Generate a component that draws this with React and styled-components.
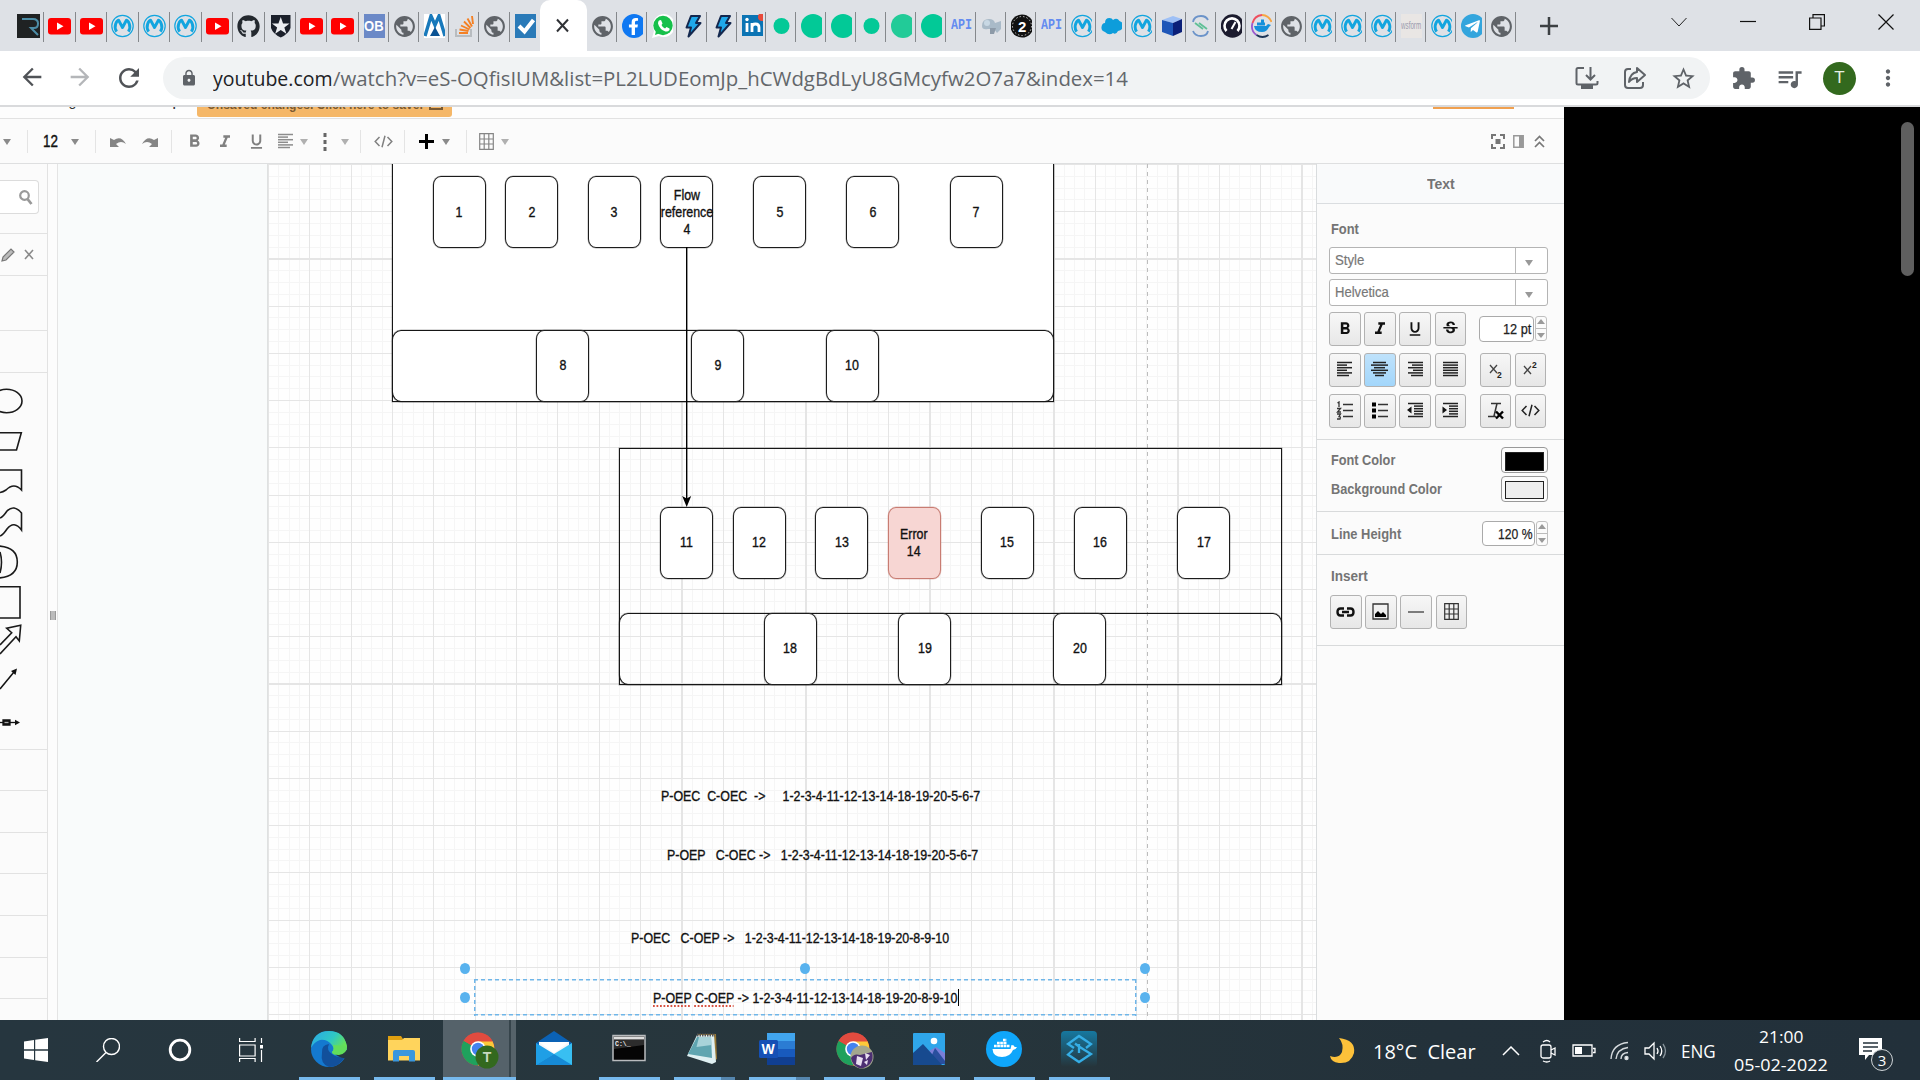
import React, { useLayoutEffect, useRef, useState } from "react";
import styled, { createGlobalStyle, css } from "styled-components";
import {
  MdPublic, MdLock, MdStarBorder, MdExtension, MdQueueMusic, MdMoreVert, MdRefresh,
  MdArrowBack, MdArrowForward, MdFormatBold, MdFormatItalic, MdFormatUnderlined,
  MdStrikethroughS,
} from "react-icons/md";
import { FaGithub, FaFacebookF, FaWhatsapp, FaTelegramPlane } from "react-icons/fa";

const SANS = '"Liberation Sans", Arial, sans-serif';
const UI = '"Open Sans", "Noto Sans", sans-serif';
const UX = 10.335;
const UY = 11.805;

const Global = createGlobalStyle`
  * { box-sizing: border-box; }
  body { margin: 0; background: #000; overflow: hidden; font-family: ${SANS}; }
  svg { display: block; flex: none; }
`;

/* ---------- text fitted to a given width ---------- */
const FitBox = styled.span`
  display: inline-block;
  flex: none;
  white-space: pre;
  width: ${(p) => p.$w}px;
  > span { display: inline-block; transform-origin: left center; }
`;
function Fit({ w, children }) {
  const ref = useRef(null);
  const [k, setK] = useState(1);
  useLayoutEffect(() => {
    setK(w / ref.current.offsetWidth);
  }, [w]);
  return (
    <FitBox $w={w}>
      <span ref={ref} style={{ transform: `scaleX(${k})` }}>{children}</span>
    </FitBox>
  );
}

/* ---------- browser chrome ---------- */
const Screen = styled.div`
  width: 1920px;
  height: 1080px;
  display: flex;
  flex-direction: column;
  overflow: hidden;
`;
const TabStrip = styled.div`
  height: 51px;
  flex: none;
  display: flex;
  background: #dee1e6;
  padding-left: 13px;
`;
const Tab = styled.div`
  width: ${(p) => p.$w}px;
  height: 51px;
  flex: none;
  display: flex;
  padding-left: ${(p) => (p.$w > 31 ? 4 : 5)}px;
  align-items: center;
  justify-content: space-between;
  &::after {
    content: "";
    width: 1px;
    height: 30px;
    margin-top: 2px;
    background: ${(p) => (p.$last ? "transparent" : "#85888c")};
  }
`;
const Fav = styled.div`
  width: ${(p) => p.$w}px;
  height: 24px;
  margin-top: 1px;
  overflow: hidden;
  display: flex;
  align-items: center;
`;
const ActiveTab = styled.div`
  width: 47px;
  height: 51px;
  flex: none;
  background: #fff;
  border-radius: 10px 10px 0 0;
  display: flex;
  align-items: center;
  justify-content: center;
  padding-right: 2px;
`;
const NewTab = styled.div`
  width: 66px;
  display: flex;
  align-items: center;
  justify-content: center;
`;
const WindowControls = styled.div`
  margin-left: auto;
  display: flex;
  align-items: flex-start;
  padding: 14px 26px 0 0;
  gap: 53px;
`;
const AddressBar = styled.div`
  height: 56px;
  flex: none;
  background: #fff;
  border-bottom: 2px solid #d9dadc;
  display: flex;
  align-items: center;
  color: #5f6368;
  padding: 0 19px 0 18px;
`;
const NavButtons = styled.div`
  display: flex;
  width: 145px;
  gap: 20px;
`;
const Omnibox = styled.div`
  width: 1547px;
  height: 42px;
  border-radius: 21px;
  background: #f1f3f4;
  display: flex;
  align-items: center;
  padding: 0 13px 0 17px;
  font: 20px ${UI};
`;
const LockSlot = styled.div`
  width: 33px;
`;
const OmniActions = styled.div`
  margin-left: auto;
  display: flex;
  gap: 22px;
`;
const Url = styled.span`
  display: flex;
  color: ${(p) => (p.$host ? "#202124" : "#63676b")};
`;
const BarActions = styled.div`
  display: flex;
  align-items: center;
  margin-left: auto;
  gap: 19px;
`;
const Avatar = styled.div`
  width: 33px;
  height: 33px;
  border-radius: 50%;
  background: #33691e;
  color: #e8efe4;
  display: flex;
  align-items: center;
  justify-content: center;
  font: 17px ${SANS};
`;

/* ---------- editor ---------- */
const Stage = styled.div`
  height: 913px;
  flex: none;
  display: flex;
  background: #000;
`;
const Editor = styled.div`
  width: 1564px;
  flex: none;
  display: flex;
  flex-direction: column;
  background: #fcfcfc;
`;
const Scroll = styled.div`
  width: 13px;
  height: 154px;
  margin: 15px 6px 0 auto;
  border-radius: 7px;
  background: #5f5f5f;
`;
const MenuRow = styled.div`
  height: 12px;
  flex: none;
  overflow: hidden;
  display: flex;
  align-items: flex-start;
  background: #fdfdfd;
  border-bottom: 1px solid #e2e2e2;
`;
const MenuText = styled.div`
  font: 15px/18px ${SANS};
  color: #333;
  margin: -15px 0 0 ${(p) => p.$gap}px;
`;
const SaveNotice = styled.div`
  width: 255px;
  height: 10px;
  margin-left: 15px;
  border-radius: 0 0 3px 3px;
  background: #f5b768;
  color: #7b5a31;
  overflow: hidden;
  display: flex;
  font: bold 13.5px/16px ${SANS};
  padding-left: 10px;
  > * { margin-top: -10px; }
  > svg { margin: -10px 0 0 6px; }
`;
const ShareStub = styled.div`
  width: 81px;
  height: 2px;
  margin: 0 50px 0 auto;
  background: #f0a04f;
`;
const ToolRow = styled.div`
  height: 45px;
  flex: none;
  display: flex;
  align-items: center;
  background: #fbfbfb;
  border-bottom: 1px solid #dedfe0;
  padding-top: 1px;
  color: #777;
`;
const Tool = styled.div`
  margin-left: ${(p) => p.$gap}px;
  width: ${(p) => p.$w}px;
  flex: none;
  display: flex;
  justify-content: center;
  color: ${(p) => p.$c || "#808080"};
  font: 17px ${SANS};
  -webkit-text-stroke: 0.4px currentColor;
`;
const ToolSep = styled.div`
  width: 1px;
  height: 23px;
  margin-left: ${(p) => p.$gap}px;
  background: #e4e4e4;
`;
const Caret = styled.div`
  border: 4.5px solid transparent;
  border-top: 6px solid ${(p) => p.$c || "#8a8a8a"};
  border-bottom: 0;
`;
const Work = styled.div`
  flex: 1;
  display: flex;
  min-height: 0;
`;
const ShapeBar = styled.div`
  width: 48px;
  flex: none;
  border-right: 1px solid #e2e2e2;
  background: #fbfbfb;
  overflow: hidden;
`;
const BarRow = styled.div`
  height: ${(p) => p.$h}px;
  display: flex;
  align-items: center;
  border-bottom: 1px solid #e2e2e2;
`;
const SearchField = styled.div`
  width: 39px;
  height: 34px;
  margin-bottom: 3px;
  border: 1px solid #dcdcdc;
  border-left: 0;
  border-radius: 0 4px 4px 0;
  background: #fff;
  display: flex;
  align-items: center;
  justify-content: flex-end;
  padding-right: 5px;
`;
const Palette = styled.div`
  height: 377px;
  border-bottom: 1px solid #e2e2e2;
`;
const Splitter = styled.div`
  width: 10px;
  flex: none;
  border-right: 1px solid #e4e4e4;
  background: #fcfcfc;
  display: flex;
  align-items: center;
  justify-content: center;
  padding-top: 47px;
  &::after {
    content: "";
    width: 4px;
    height: 9px;
    border: solid #999;
    border-width: 0 1px;
    background: #bbb;
  }
`;
const Canvas = styled.div`
  width: 1258px;
  flex: none;
  overflow: hidden;
  background: #f9fbfb;
  padding-left: 209px;
`;
const Paper = styled.div`
  position: relative;
  width: 1049px;
  height: 857px;
  border-left: 1px solid #dfe1e1;
  background:
    repeating-linear-gradient(to right, #e5e5e5 0 1.1px, transparent 1.1px ${4 * UX}px) 0 0 / 100% 100%,
    repeating-linear-gradient(to bottom, #e5e5e5 0 1.1px, transparent 1.1px ${4 * UY}px) 0 0 / 100% 100%,
    repeating-linear-gradient(to right, #f5f5f5 0 1px, transparent 1px ${UX}px) 0 0 / 100% 100%,
    repeating-linear-gradient(to bottom, #f5f5f5 0 1px, transparent 1px ${UY}px) 0 0 / 100% 100%,
    #fefefe;
`;
const place = css`
  position: absolute;
  left: ${(p) => p.$x * UX - 0.4}px;
  top: ${(p) => p.$y * UY + 0.3}px;
  width: ${(p) => p.$cw * UX + 1.2}px;
  height: ${(p) => p.$ch * UY + 1.4}px;
`;
const Frame = styled.div`
  ${place}
  border: 1px solid #161616;
  box-shadow: 0 0 0 0.5px rgba(0, 0, 0, 0.3);
  background: ${(p) => (p.$fill ? "#fff" : "transparent")};
  border-radius: ${(p) => (p.$round ? "9px/10px" : "0")};
`;
const Box = styled.div`
  ${place}
  border: 1px solid ${(p) => (p.$error ? "#c87c72" : "#1c1c1c")};
  box-shadow: 0 0 0 0.5px ${(p) => (p.$error ? "rgba(200, 124, 114, 0.4)" : "rgba(0, 0, 0, 0.3)")};
  border-radius: 8px/9px;
  background: ${(p) => (p.$error ? "#f7d6d3" : "#fff")};
  display: flex;
  align-items: center;
  justify-content: center;
  text-align: center;
  font: 14.2px/17px ${SANS};
  color: #111;
  white-space: pre;
  -webkit-text-stroke: 0.35px #111;
  > span { display: block; transform: scaleX(0.875); }
`;
const Edge = styled.svg`
  position: absolute;
  left: 413px;
  top: 83px;
`;
const PageBreak = styled.div`
  position: absolute;
  left: 879px;
  top: 0;
  height: 100%;
  width: 1px;
  background: repeating-linear-gradient(to bottom, #bdbdbd 0 4px, transparent 4px 8px);
`;
const Line = styled.div`
  position: absolute;
  left: ${(p) => p.$left}px;
  top: ${(p) => p.$top}px;
  font: 14.2px/18px ${SANS};
  color: #111;
  -webkit-text-stroke: 0.35px #111;
`;
const Typo = styled.span`
  text-decoration: underline dotted #d8513f 2px;
  text-underline-offset: 3px;
`;
const dash = "#6fb6e9 0 4px, transparent 4px 7px";
const Selection = styled.div`
  ${place}
  background:
    repeating-linear-gradient(to right, ${dash}) 0 0 / 100% 1.5px no-repeat,
    repeating-linear-gradient(to right, ${dash}) 0 100% / 100% 1.5px no-repeat,
    repeating-linear-gradient(to bottom, ${dash}) 0 0 / 1.5px 100% no-repeat,
    repeating-linear-gradient(to bottom, ${dash}) 100% 0 / 1.5px 100% no-repeat;
`;
const Handle = styled.div`
  position: absolute;
  left: ${(p) => p.$left - 5}px;
  top: ${(p) => p.$top - 5.5}px;
  width: 10px;
  height: 11px;
  border-radius: 50%;
  background: #58b2ee;
`;
const Cursor = styled.div`
  position: absolute;
  left: 690px;
  top: 825px;
  width: 1px;
  height: 17px;
  background: #000;
`;

/* ---------- format panel ---------- */
const Panel = styled.div`
  flex: 1;
  border-left: 1px solid #d9dcde;
  background: #fbfbfb;
  color: #747474;
  font: bold 15px/18px ${SANS};
`;
const PanelTitle = styled.div`
  height: 40px;
  display: flex;
  align-items: center;
  justify-content: center;
  border-bottom: 1px solid #dadde0;
  background: #f9fafb;
`;
const Section = styled.div`
  height: ${(p) => p.$h}px;
  border-bottom: 1px solid #d8dadb;
  padding: ${(p) => p.$pt}px 16px 0 12px;
`;
const Label = styled.div`
  padding-left: 2px;
  display: flex;
`;
const Select = styled.div`
  width: 219px;
  height: 27px;
  margin-top: ${(p) => p.$mt}px;
  border: 1px solid #b4b4b4;
  border-radius: 3px;
  background: #fff;
  font: 15px/18px ${SANS};
  color: #777;
  -webkit-text-stroke: 0.2px #777;
  display: flex;
  align-items: center;
  justify-content: space-between;
  padding-left: 5px;
`;
const SelectArrow = styled.div`
  width: 32px;
  height: 100%;
  border-left: 1px solid #b9b9b9;
  display: flex;
  align-items: center;
  padding: 5px 0 0 9px;
`;
const Row = styled.div`
  display: flex;
  align-items: center;
  margin-top: ${(p) => p.$mt || 0}px;
  gap: 3.7px;
`;
const Btn = styled.div`
  width: 31.5px;
  height: 34px;
  flex: none;
  margin-left: ${(p) => p.$ml || 0}px;
  border: 1px solid #b2b2b2;
  border-radius: 3px;
  background: ${(p) => (p.$on ? "linear-gradient(#bfe2fb, #a2d6fb)" : "linear-gradient(#f7f7f7, #e7e7e7)")};
  display: flex;
  align-items: center;
  justify-content: center;
  color: #111;
`;
const NumField = styled.div`
  width: ${(p) => p.$w}px;
  height: ${(p) => p.$h}px;
  margin-left: ${(p) => p.$ml}px;
  border: 1px solid #aaa;
  border-radius: 4px;
  background: #fff;
  color: #222;
  font: 15.5px/18px ${SANS};
  -webkit-text-stroke: 0.25px #222;
  display: flex;
  align-items: center;
  justify-content: flex-end;
  padding-right: 2px;
`;
const Spinner = styled.div`
  width: 12px;
  height: 25px;
  margin-left: -3px;
  border: 1px solid #c0c0c0;
  border-radius: 3px;
  display: flex;
  flex-direction: column;
  align-items: center;
  justify-content: space-around;
`;
const SpinArrow = styled.div`
  border: 4px solid transparent;
  ${(p) => (p.$up ? "border-bottom: 5px solid #9a9a9a; border-top: 0;" : "border-top: 5px solid #9a9a9a; border-bottom: 0;")}
`;
const SpinRule = styled.div`
  width: 10px;
  height: 1px;
  background: #bbb;
`;
const ColorRow = styled.div`
  display: flex;
  align-items: center;
  justify-content: space-between;
  height: 26px;
  margin-bottom: 2.5px;
`;
const Swatch = styled.div`
  width: 47.5px;
  height: 26px;
  border: 1.5px solid #999;
  border-radius: 4px;
  background: #fcfcfc;
  padding: 4px 3px;
  &::after {
    content: "";
    display: block;
    height: 16.5px;
    border: 1px solid #222;
    background: ${(p) => p.$c};
  }
`;

/* ---------- taskbar ---------- */
const Taskbar = styled.div`
  height: 60px;
  flex: none;
  display: flex;
  background: linear-gradient(90deg, #26363f, #27363c 45%, #23313a 75%, #22303a);
  color: #fff;
  font: 17px ${UI};
`;
const SysButton = styled.div`
  width: ${(p) => p.$w || 72}px;
  display: flex;
  align-items: center;
  justify-content: center;
`;
const AppButton = styled.div`
  width: 75px;
  height: 60px;
  display: flex;
  flex-direction: column;
  align-items: center;
  justify-content: space-between;
  padding-top: 11px;
  > svg { margin-right: ${(p) => (p.$multi ? 5 : 2)}px; }
  background: ${(p) => (p.$active ? "linear-gradient(90deg, transparent 1px, #55626a 1px 67px, #36444b 67px 69px, #56636a 69px 74px, transparent 74px)" : "none")};
`;
const OpenMark = styled.div`
  width: ${(p) => (p.$active ? 73 : 61)}px;
  height: 3px;
  background: ${(p) => (p.$none ? "transparent" : p.$multi ? "linear-gradient(90deg, #76b9ed 47px, #5586ae 47px)" : "#76b9ed")};
`;
const Tray = styled.div`
  margin-left: auto;
  display: flex;
  align-items: center;
`;
const TrayItem = styled.div`
  width: ${(p) => p.$w}px;
  display: flex;
  align-items: center;
  justify-content: ${(p) => p.$j || "center"};
  font-size: ${(p) => p.$fs || 17}px;
  margin-top: 2px;
`;
const Clock = styled.div`
  width: 102px;
  margin: 1px 19px 0 6px;
  display: flex;
  flex-direction: column;
  align-items: center;
  font-size: 17px;
  line-height: 28px;
`;
const Notice = styled.div`
  position: relative;
  width: 69px;
  display: flex;
  padding-left: 7px;
`;
const Badge = styled.div`
  position: absolute;
  left: 20px;
  top: 12px;
  width: 22px;
  height: 22px;
  border-radius: 50%;
  background: #25323b;
  border: 1px solid #cfd4d7;
  display: flex;
  align-items: center;
  justify-content: center;
  font-size: 15px;
`;

/* ---------- favicons ---------- */
const S = ({ s = 24, vb = "0 0 24 24", w, h, children, ...r }) => (
  <svg width={w || s} height={h || s} viewBox={vb} fill="none" {...r}>{children}</svg>
);
const Tile = styled.div`
  width: ${(p) => p.$w || 24}px;
  height: 24px;
  flex: none;
  border-radius: ${(p) => p.$r || 0};
  background: ${(p) => p.$bg};
  color: ${(p) => p.$c || "#fff"};
  display: flex;
  align-items: center;
  justify-content: center;
  font: ${(p) => p.$font || `bold 15px/20px ${SANS}`};
  > svg { flex: none; }
`;
const Yt = () => (
  <S><rect y="4" width="23" height="16.5" rx="3" fill="#f00" /><path d="M9 8.5v7.5l6.5-3.7z" fill="#fff" /></S>
);
const Mule = () => (
  <S stroke="#12a5df"><circle cx="11.5" cy="12" r="10.7" strokeWidth="1.2" /><path d="M5.6 17.6C2 12 6 6.500 7.600 6.200L11.500 13.500 15.400 6.200C17 6.500 21 12 17.400 17.600" strokeWidth="2.900" strokeLinejoin="round" /></S>
);
const GlobeShift = styled.div`
  margin-left: -2px;
`;
const Globe = () => <GlobeShift><MdPublic size={25} color="#5f6368" /></GlobeShift>;
const Bolt = () => (
  <S><path d="M9 2h9l-4 7h4.500L6.500 22.500l2.500-9H4.500z" fill="#1fa8ea" stroke="#14284f" strokeWidth="2" strokeLinejoin="round" /></S>
);
const Dot = ({ small, c = "#02c997" }) => <S><circle cx={small ? 10.500 : 12} cy="12" r={small ? 8 : 12} fill={c} /></S>;
const fav = {
  r: <S><path d="M0 0h24v24H0z" fill="#1f2223" /><path d="M5 5h11q5 0 5 4.500T17 14h-3l7 7" stroke="#4d8ea8" strokeWidth="2" /></S>,
  yt: <Yt />, mule: <Mule />, globe: <Globe />, bolt: <Bolt />,
  git: <FaGithub size={23} color="#24292f" />,
  auth: <S><path d="M2 1h19.500v13q-2 6-9.750 9.500Q4 20 2 14z" fill="#1b202b" /><path d="M11.750 3l2.300 6.500h6.500l-5.200 4 2 6.300-5.600-3.900-5.600 3.900 2-6.300-5.200-4h6.500z" fill="#eceef2" /></S>,
  ob: <Tile $w={21} $bg="#6b89c7"><Fit w={20}>OB</Fit></Tile>,
  mw: <S><path d="M0 0h24v24H0z" fill="#fff" /><path d="M1 22L7 2l4 9 4-9 6 20" stroke="#1879bb" strokeWidth="3.400" /><path d="M6 22l5-9 5 9z" fill="#0b5394" /></S>,
  so: <S><path d="M2 15v7h15v-7" stroke="#b8bcc0" strokeWidth="2" /><path d="M5 19h9M5.500 15.500l9 1.500M7 11.500l8.500 4M10 7.500l6.500 6.500M13.500 4.500l4.500 8M18 2l1 8" stroke="#f48024" strokeWidth="1.900" /></S>,
  check: <S><path d="M0 0h24v24H0z" fill="#2a7ab8" /><path d="M4 12l5.500 5.500L18.500 6" stroke="#fff" strokeWidth="4" /></S>,
  fb: <Tile $bg="#0f78f2" $r="50%"><FaFacebookF size={17} /></Tile>,
  wa: <S><path d="M0 24l2-7A11 11.500 0 1 1 7 22z" fill="#fff" /><circle cx="11" cy="11.500" r="9.700" fill="#16c04b" /><path d="M3 21l1.500-6 4 4z" fill="#16c04b" /><path d="M7 6.500l2-.5 1.500 3.500-1 1.500q1 2.500 3.500 3.500l1.500-1.500 3 1.500v1.500q-1.500 2-4 1.500-6-2-7.500-8 0-2 1-3z" fill="#fff" /></S>,
  li: <S><path d="M0 1h22v21H0z" fill="#0b74b4" /><path d="M5 9v9M10 18V9M10 13q0-3 3.500-3t3.500 3.500V18" stroke="#fff" strokeWidth="2.800" /><circle cx="5" cy="5.500" r="1.700" fill="#fff" /><circle cx="20" cy="3" r="4" fill="#e84b3c" /></S>,
  dot: <Dot small />, big: <Dot />, pale: <Dot c="#22cb98" />,
  api: <Tile $w={21} $bg="transparent" $c="#648cf0" $font={'bold 15px/20px "Liberation Mono", monospace'}><Fit w={21}>API</Fit></Tile>,
  cloud: <S><path d="M1 12q0-7 7-7 5 0 6 4l6-2v8l-4 4-3-4H7q-6 1-6-3z" fill="#a9bac8" /><path d="M9 14h6l-2 6H9z" fill="#8d9aa8" /><circle cx="6" cy="9" r="3" fill="#c8d8e4" /></S>,
  two: <S><circle cx="11" cy="12" r="11.500" fill="#111" /><circle cx="11" cy="12" r="9.500" stroke="#ccc" strokeDasharray="1.500 2" /><text x="7" y="17.500" fill="#fff" fontFamily="Liberation Sans" fontWeight="700" fontSize="15">2</text></S>,
  sf: <S><path d="M4 18Q0 17 .5 13T4 9q0-5 4.500-5Q11 4 12 6q4-3 6.500 1Q22 8 22 12t-5 5q-2 4-5 2-4 3-8-1z" fill="#0d9ddb" /></S>,
  cube: <S><path d="M1 6l11-4 9 3-9 4z" fill="#9ec0f6" /><path d="M1 6l11 3v13L1 18z" fill="#1e56b8" /><path d="M12 9l9-4v13l-9 4z" fill="#0a1f78" /></S>,
  sn: <S strokeWidth="1.800"><path d="M2 8q1-6 8-6 5 0 7 4M2 17q2 5 8 5t7-5" stroke="#6b93c9" /><path d="M4 9l8 6M8 9l8 6" stroke="#5fc096" /></S>,
  gauge: <S><circle cx="11.500" cy="12" r="11.700" fill="#1b1b2e" /><path d="M5.500 17a7.500 7.500 0 1 1 11 0" stroke="#fff" strokeWidth="2.600" /><path d="M10.500 15l4-7" stroke="#fff" strokeWidth="2" /></S>,
  dock: <S><path d="M11 1A11 11 0 0 1 20.500 8" stroke="#f7a541" strokeWidth="1.800" /><path d="M11 1A11 11 0 0 0 1.500 9" stroke="#ee4f5f" strokeWidth="1.800" /><path d="M1.500 9a11 11 0 0 0 4 12" stroke="#9b59d0" strokeWidth="1.800" /><path d="M5.500 21q6 4 12 0" stroke="#1d3557" strokeWidth="1.800" /><path d="M3 12h12l2-2 3 1-2 2q-2 5-7 5-7 0-8-6zM6 8.500h8v3H6zM10 5.500h3v3h-3z" fill="#1490db" /></S>,
  ws: <Tile $w={21} $bg="#e9e6e4" $c="#9a9cae" $font={`10px/20px ${SANS}`}><Fit w={20}>wsform</Fit></Tile>,
  tg: <Tile $bg="#33a5dd" $r="50%"><FaTelegramPlane size={17} /></Tile>,
};
const tabsA = ["r", "yt", "yt", "mule", "mule", "mule", "yt", "git", "auth", "yt", "yt"];
const tabsB = ["ob", "globe", "mw", "so", "globe", "check"];
const tabsC = ["globe", "fb", "wa", "bolt", "bolt", "li", "dot", "big", "big", "dot", "pale", "big", "api", "cloud", "two", "api", "mule", "sf", "mule", "cube", "sn", "gauge", "dock", "globe", "mule", "mule", "mule", "ws", "mule", "tg", "globe"];

/* ---------- glyphs ---------- */
const bars = {
  left: [[2, 17], [2, 12], [2, 17], [2, 12], [2, 17], [2, 14]],
  center: [[3, 16], [1, 18], [4, 15], [1, 18], [3, 16], [5, 14]],
  right: [[2, 17], [6, 17], [2, 17], [7, 17], [2, 17], [5, 17]],
  full: [[2, 17], [2, 17], [2, 17], [2, 17], [2, 17], [2, 17]],
  out: [[2, 17], [8, 17], [8, 17], [8, 17], [8, 17], [2, 17]],
};
const Bars = ({ kind, s = 19, c = "#222", arrow }) => (
  <S s={s} vb="0 0 19 19" stroke={c} strokeWidth="1.500">
    {bars[kind].map(([a, b], i) => <path key={i} d={`M${a} ${2.500 + i * 2.600}H${b}`} />)}
    {arrow && <path d={arrow} fill="#111" stroke="none" />}
  </S>
);
const Grid3 = ({ c }) => <S w={15} h={17} vb="0 0 15 17" stroke={c} strokeWidth="1.200"><path d="M.7.7h13.600v15.600H.7zM5.200.7v15.600M9.800.7v15.600M.7 6h13.600M.7 11h13.600" /></S>;
const Code = ({ c }) => <S w={19} h={13} vb="0 0 19 13" stroke={c} strokeWidth="1.500"><path d="M5.500 2L1.200 6.500 5.500 11M13.500 2l4.300 4.500L13.500 11M11 .8L8 12.200" /></S>;
const Script = ({ up }) => (
  <S w={20} h={20} vb="0 0 20 20"><path d={up ? "M3 6l7 8M10 6l-7 8" : "M4 5l7 8M11 5l-7 8"} stroke="#444" strokeWidth="1.300" /><text x="11" y={up ? 8 : 18} fontFamily="Liberation Sans" fontWeight="700" fontSize="8.500" fill="#222">2</text></S>
);
const NumList = ({ dots }) => (
  <S w={18} h={19} vb="0 0 18 19" stroke="#333" strokeWidth="1.300">
    <path d="M7 3.500h10M7 9.500h10M7 15.500h10" />
    {dots ? <path d="M1 3.500h4M1 9.500h4M1 15.500h4" stroke="#000" strokeWidth="4" /> : <path d="M1.500 2L3 1v5M1 7.500h3.500L1.500 11H5M1 13h3.500l-1.500 2.500q2 0 1 2.500H1" />}
  </S>
);

const shapes = [
  [373, 49, "M-9 401a15.500 11.700 0 1 0 31 0a15.500 11.700 0 1 0-31 0"],
  [422, 38, "M-4 432.700H21.300L16.500 450H-4"],
  [460, 39, "M-3 470H21.500V490Q14 482 6 490Q3 492 0 492.500"],
  [499, 41, "M0 518Q3 517 7 511Q14 504 21.500 513V530Q14 520 7 529Q3 535 0 536"],
  [540, 42, "M-2 546Q17.300 547 17.300 562T-2 578M0 552Q3 562 0 573"],
  [582, 40, "M-4 586.700H20V618H-4"],
  [622, 38, "M0 645L11.700 632.700 6.700 628.300 20.700 625.300 19.300 641 16 636.700 0 654"],
];

const topNodes = [[16, "1"], [23, "2"], [31, "3"], [38, "Flow\nreference\n4"], [47, "5"], [56, "6"], [66, "7"]];
const errNodes = [[26, "8"], [41, "9"], [54, "10"]];
const subNodes = [[38, "11"], [45, "12"], [53, "13"], [60, "Error\n14"], [69, "15"], [78, "16"], [88, "17"]];
const subErr = [[48, "18"], [61, "19"], [76, "20"]];
const Nodes = ({ list, y }) => list.map(([x, t]) => (
  <Box key={t} $x={x} $y={y} $cw={5} $ch={6} $error={t.startsWith("Error")}><span>{t}</span></Box>
));

function Browser() {
  const tab = (w, fw, last) => (k, i, a) => <Tab key={k + i} $w={w} $last={last && i === a.length - 1}><Fav $w={fw}>{fav[k]}</Fav></Tab>;
  return (
    <>
      <TabStrip>
        {tabsA.map(tab(31.45, 23))}
        {tabsB.map(tab(30.150, 21, true))}
        <ActiveTab><S w={13} h={15} vb="0 0 13 15" stroke="#303236" strokeWidth="2"><path d="M1 1.500l11 12M12 1.500l-11 12" /></S></ActiveTab>
        {tabsC.map(tab(29.980, 21))}
        <NewTab><S s={18} vb="0 0 18 18" stroke="#3c4043" strokeWidth="2.500"><path d="M9 0v18M0 9h18" /></S></NewTab>
        <WindowControls>
          <S s={16} vb="0 0 16 16" stroke="#222"><path d="M.5 4l7.500 8 7.500-8" /></S>
          <S s={16} vb="0 0 16 16" stroke="#111" strokeWidth="1.200"><path d="M0 7.500h16" /></S>
          <S s={16} vb="0 0 16 16" stroke="#111" strokeWidth="1.200"><path d="M.6 4h11.400v11.400H.6zM4 4V.6h11.400V12H12" /></S>
          <S s={16} vb="0 0 16 16" stroke="#111" strokeWidth="1.200"><path d="M.5.5l15 15M15.500.5l-15 15" /></S>
        </WindowControls>
      </TabStrip>
      <AddressBar>
        <NavButtons>
          <MdArrowBack size={28} color="#505357" /><MdArrowForward size={28} color="#b4b6b9" /><MdRefresh size={30} color="#505357" />
        </NavButtons>
        <Omnibox>
          <LockSlot><MdLock size={18} color="#5f6368" /></LockSlot>
          <Url $host><Fit w={120}>youtube.com</Fit></Url>
          <Url><Fit w={795}>/watch?v=eS-OQfisIUM&amp;list=PL2LUDEomJp_hCWdgBdLyU8GMcyfw2O7a7&amp;index=14</Fit></Url>
          <OmniActions>
            <S s={26} vb="0 0 26 26" stroke="#5f6368" strokeWidth="2"><path d="M10 3H4q-1.500 0-1.500 1.500V18q0 1.500 1.500 1.500h18q1.500 0 1.500-1.500v-2M16.500 2v12M12 10l4.500 4.500L21 10" /><path d="M7 20h12v4H7z" fill="#5f6368" stroke="none" /></S>
            <S s={26} vb="0 0 26 26" stroke="#5f6368" strokeWidth="2"><path d="M9 4H6Q3 4 3 7v13q0 3 3 3h12q3 0 3-3v-3" /><path d="M15 3l8 7-8 7v-4q-5 0-8 4 1-9 8-10z" strokeLinejoin="round" /></S>
            <MdStarBorder size={27} />
          </OmniActions>
        </Omnibox>
        <BarActions>
          <MdExtension size={25} /><MdQueueMusic size={29} />
          <Avatar>T</Avatar><MdMoreVert size={26} />
        </BarActions>
      </AddressBar>
    </>
  );
}

function EditorTools() {
  const light = "#b0b0b0";
  return (
    <>
      <MenuRow>
        <MenuText $gap={34}><Fit w={50}>Arrange</Fit></MenuText>
        <MenuText $gap={62}><Fit w={36}>Help</Fit></MenuText>
        <SaveNotice>
          <Fit w={216}>Unsaved changes. Click here to save.</Fit>
          <S w={14} h={14} vb="0 0 14 14" stroke="#7b5a31" strokeWidth="2"><path d="M1 1h12v11H1zM4 8h6" /></S>
        </SaveNotice>
        <ShareStub />
      </MenuRow>
      <ToolRow>
        <Tool $gap={2} $w={9}><Caret /></Tool>
        <ToolSep $gap={16} />
        <Tool $gap={15} $w={15} $c="#111"><Fit w={15}>12</Fit></Tool>
        <Tool $gap={12} $w={9}><Caret /></Tool>
        <ToolSep $gap={16} />
        <Tool $gap={14} $w={16}><S w={16} h={12} vb="0 0 16 12"><path d="M0 2v9h9L6 8q5-4 10 0Q11-1 4 4z" fill="#858585" /></S></Tool>
        <Tool $gap={16} $w={16}><S w={16} h={12} vb="0 0 16 12"><path d="M16 2v9H7l3-3Q5 4 0 8 5-1 12 4z" fill="#858585" /></S></Tool>
        <ToolSep $gap={13} />
        <Tool $gap={16} $w={12}><MdFormatBold size={21} /></Tool>
        <Tool $gap={19} $w={12}><MdFormatItalic size={20} /></Tool>
        <Tool $gap={18} $w={14}><MdFormatUnderlined size={19} /></Tool>
        <Tool $gap={14} $w={17}><Bars kind="left" c="#8c8c8c" /></Tool>
        <Tool $gap={5} $w={9}><Caret $c={light} /></Tool>
        <Tool $gap={14} $w={5}><S w={4} h={18} vb="0 0 4 18" stroke="#666" strokeWidth="3"><path d="M2 0v4M2 7v4M2 14v4" /></S></Tool>
        <Tool $gap={13} $w={9}><Caret $c={light} /></Tool>
        <ToolSep $gap={11} />
        <Tool $gap={13} $w={19}><Code c="#808080" /></Tool>
        <ToolSep $gap={11} />
        <Tool $gap={14} $w={15}><S s={15} vb="0 0 15 15" stroke="#000" strokeWidth="3"><path d="M7.500 0v15M0 7.500h15" /></S></Tool>
        <Tool $gap={7} $w={9}><Caret /></Tool>
        <ToolSep $gap={16} />
        <Tool $gap={12} $w={15}><Grid3 c="#858585" /></Tool>
        <Tool $gap={6} $w={9}><Caret $c={light} /></Tool>
        <Tool $gap={982} $w={14}><S w={14} h={15} vb="0 0 14 15" stroke="#777" strokeWidth="2"><path d="M1 5V1h4M9 1h4v4M13 10v4H9M5 14H1v-4" /><path d="M4.500 5h5v5h-5z" fill="#777" stroke="none" /></S></Tool>
        <Tool $gap={8} $w={11}><S w={11} h={13} vb="0 0 11 13" stroke="#999" strokeWidth="1.500"><path d="M.8.8h9.400v11.400H.8z" /><path d="M8 1v11" strokeWidth="4" /></S></Tool>
        <Tool $gap={10} $w={11}><S w={11} h={13} vb="0 0 11 13" stroke="#777" strokeWidth="1.700"><path d="M1 6l4.500-4.500L10 6M1 12l4.500-4.500L10 12" /></S></Tool>
      </ToolRow>
    </>
  );
}

const EditTools = styled.div`
  display: flex;
  align-items: center;
  gap: 9px;
  padding-left: 1px;
`;

function Sidebar() {
  return (
    <ShapeBar>
      <BarRow $h={70}><SearchField><S w={14} h={15} vb="0 0 14 15" stroke="#999" strokeWidth="2.200"><circle cx="5.500" cy="5.500" r="4.300" /><path d="M8.500 9l4 5" strokeWidth="2.800" /></S></SearchField></BarRow>
      <BarRow $h={42}>
        <EditTools>
          <S w={14} h={14} vb="0 0 14 14"><path d="M1 13l1-4 8-8 3 3-8 8z" stroke="#777" fill="#bbb" strokeWidth="1.200" /></S>
          <S w={10} h={11} vb="0 0 10 11" stroke="#8a8a8a" strokeWidth="1.600"><path d="M1 1l8 9M9 1l-8 9" /></S>
        </EditTools>
      </BarRow>
      <BarRow $h={55} />
      <BarRow $h={42} />
      <Palette>
        {shapes.map(([y, h, d]) => <S key={y} w={24} h={h} vb={`0 ${y} 24 ${h}`} stroke="#1a1a1a" strokeWidth="1.600"><path d={d} /></S>)}
        <S w={24} h={45} vb="0 660 24 45" stroke="#111" strokeWidth="1.500"><path d="M0 689L14 672" /><path d="M17 668.500l-6 2.500 4.500 4z" fill="#111" stroke="none" /></S>
        <S w={24} h={44} vb="0 705 24 44" stroke="#111" strokeWidth="1.300"><path d="M0 722.500h17" /><path d="M3 720h7v5H3z" fill="#111" /><path d="M20 722.500l-5-2.700v5.400z" fill="#111" stroke="none" /><path d="M4.500 722.500h4" stroke="#aaa" /></S>
      </Palette>
      {[41, 42, 41, 42, 42, 41].map((h, i) => <BarRow key={i} $h={h} />)}
    </ShapeBar>
  );
}

function Diagram() {
  return (
    <Canvas>
      <Paper>
        <PageBreak />
        <Frame $fill $x={12} $y={-2} $cw={64} $ch={22} />
        <Frame $round $x={12} $y={14} $cw={64} $ch={6} />
        <Nodes list={topNodes} y={1} />
        <Nodes list={errNodes} y={14} />
        <Frame $x={34} $y={24} $cw={64} $ch={20} />
        <Frame $round $x={34} $y={38} $cw={64} $ch={6} />
        <Nodes list={subNodes} y={29} />
        <Nodes list={subErr} y={38} />
        <Edge width="12" height="261" viewBox="0 0 12 261"><path d="M5.700 0v252" stroke="#000" strokeWidth="1.400" /><path d="M5.700 260L1.200 249l4.500 2.500L10.200 249z" /></Edge>
        <Line $left={393.300} $top={623}><Fit w={319}>{"P-OEC  C-OEC  ->     1-2-3-4-11-12-13-14-18-19-20-5-6-7"}</Fit></Line>
        <Line $left={398.700} $top={682}><Fit w={311}>{"P-OEP   C-OEC ->   1-2-3-4-11-12-13-14-18-19-20-5-6-7"}</Fit></Line>
        <Line $left={362.700} $top={764.500}><Fit w={318}>{"P-OEC   C-OEP ->   1-2-3-4-11-12-13-14-18-19-20-8-9-10"}</Fit></Line>
        <Line $left={385.300} $top={824.500}><Fit w={304}><Typo>P-OEP</Typo> <Typo>C-OEP</Typo>{" -> 1-2-3-4-11-12-13-14-18-19-20-8-9-10"}</Fit></Line>
        <Cursor />
        <Selection $x={20} $y={69} $cw={64} $ch={3} />
        {[[197.200, 804.500], [537.400, 804.500], [877.200, 804.500], [197.200, 833], [877.200, 833], [197.200, 861], [537.400, 861], [877.200, 861]].map(([x, y]) => <Handle key={x + "-" + y} $left={x} $top={y} />)}
      </Paper>
    </Canvas>
  );
}

const Spin = () => <Spinner><SpinArrow $up /><SpinRule /><SpinArrow /></Spinner>;

function FormatPanel() {
  return (
    <Panel>
      <PanelTitle><Fit w={28}>Text</Fit></PanelTitle>
      <Section $h={236} $pt={16}>
        <Label><Fit w={27.500}>Font</Fit></Label>
        <Select $mt={8.500}><Fit w={29}>Style</Fit><SelectArrow><Caret $c="#999" /></SelectArrow></Select>
        <Select $mt={5}><Fit w={54}>Helvetica</Fit><SelectArrow><Caret $c="#999" /></SelectArrow></Select>
        <Row $mt={6}>
          <Btn><MdFormatBold size={20} /></Btn><Btn><MdFormatItalic size={20} /></Btn><Btn><MdFormatUnderlined size={18} /></Btn><Btn><MdStrikethroughS size={19} /></Btn>
          <NumField $w={55} $h={26} $ml={9.500}><Fit w={28}>12 pt</Fit></NumField><Spin />
        </Row>
        <Row $mt={7}>
          <Btn><Bars kind="left" /></Btn><Btn $on><Bars kind="center" /></Btn><Btn><Bars kind="right" /></Btn><Btn><Bars kind="full" /></Btn>
          <Btn $ml={10}><Script /></Btn><Btn><Script up /></Btn>
        </Row>
        <Row $mt={7.200}>
          <Btn><NumList /></Btn><Btn><NumList dots /></Btn>
          <Btn><Bars kind="out" arrow="M5.500 5.500v7L1 9z" /></Btn><Btn><Bars kind="out" arrow="M1.500 5.500v7L6 9z" /></Btn>
          <Btn $ml={10}><S w={18} h={18} vb="0 0 18 18" stroke="#333"><path d="M4 1.500h10M10 1.500L7 14M1 14.500h8" strokeWidth="1.500" /><path d="M9 9.500l7 7M16 9.500l-7 7" stroke="#000" strokeWidth="2.400" /></S></Btn>
          <Btn><Code c="#222" /></Btn>
        </Row>
      </Section>
      <Section $h={72} $pt={7}>
        <ColorRow><Label><Fit w={64.500}>Font Color</Fit></Label><Swatch $c="#000" /></ColorRow>
        <ColorRow><Label><Fit w={111}>Background Color</Fit></Label><Swatch $c="#eee" /></ColorRow>
      </Section>
      <Section $h={42.500} $pt={9}>
        <Row>
          <Label><Fit w={70.500}>Line Height</Fit></Label>
          <NumField $w={53.500} $h={25} $ml={76.500}><Fit w={34.500}>120 %</Fit></NumField><Spin />
        </Row>
      </Section>
      <Section $h={91} $pt={12.500}>
        <Label><Fit w={37}>Insert</Fit></Label>
        <Row $mt={9.500}>
          <Btn $ml={1}><S w={19} h={10} vb="0 0 19 10" stroke="#111" strokeWidth="2.400"><path d="M8 1.500H4.500Q1.500 1.500 1.500 5t3 3.500H8M11 1.500h3.500q3 0 3 3.500t-3 3.500H11M6 5h7" /></S></Btn>
          <Btn><S w={17} h={18} vb="0 0 17 18"><path d="M1 1h15v15H1z" stroke="#333" strokeWidth="1.300" /><path d="M3 14v-3l3-3 3 3 2-2 3 3v2z" fill="#000" /></S></Btn>
          <Btn><S w={16} h={4} vb="0 0 16 4" stroke="#555" strokeWidth="1.500"><path d="M0 2h16" /></S></Btn>
          <Btn><Grid3 c="#333" /></Btn>
        </Row>
      </Section>
    </Panel>
  );
}

const ChromeIcon = ({ badge }) => (
  <S w={40} h={38} vb="0 0 40 38">
    <circle cx="19" cy="18" r="16.500" fill="#e14b3f" />
    <path d="M19 18L4.700 9.700A16.500 16.500 0 0 0 19 34.500l7-12z" fill="#1fa15d" />
    <path d="M19 18l7 4.500-7 12A16.500 16.500 0 0 0 33.300 10H19z" fill="#fdc93a" />
    <path d="M19 18L4.700 9.700A16.500 16.500 0 0 1 33.500 10.500H19z" fill="#e14b3f" />
    <circle cx="19" cy="18" r="7.800" fill="#fff" /><circle cx="19" cy="18" r="6.200" fill="#4483f0" />
    {badge === "T" ? <><circle cx="28" cy="26" r="11.500" fill="#33691e" /><text x="23.700" y="31" fontFamily="Liberation Sans" fontSize="14" fontWeight="700" fill="#c9d8c0">T</text></> : <>
      <circle cx="28" cy="26" r="11.500" fill="#a3a78e" /><path d="M17 27q3-5 9-3l12-3q2 7-2 12-5 5-11 4-7-3-8-10z" fill="#4c2f72" /><path d="M23 25l6 2-2 8-5-2zM31 22l5 2-4 5zM30 31l4-2-1 5z" fill="#e8dff0" />
    </>}
  </S>
);
const apps = [
  { k: "edge", icon: <S s={36} vb="0 0 36 36"><defs><linearGradient id="eg" x1="0" y1="0" x2="1" y2="0.500"><stop stopColor="#2aa7e8" /><stop offset=".6" stopColor="#2fc8c4" /><stop offset="1" stopColor="#6be34f" /></linearGradient></defs><circle cx="18" cy="18" r="18" fill="#1479cf" /><path d="M0 17Q2 0 18 0q15 0 18 15 0 8-8 9-7 0-7-3 3-3 0-7-5-6-12-5Q3 11 0 17z" fill="url(#eg)" /><path d="M11 22Q10 14 18 13q-3 6 3 10 5 4 13 3-6 10-16 10-9-3-7-14z" fill="#12509b" /><path d="M22 21q2-2 1-5 1 6 13 3v8q-8 1-14-6z" fill="#26363f" /><path d="M36 15q0 8-8 9-7 0-7-3 3-3 1-7z" fill="#62dd5c" /></S> },
  { k: "files", icon: <S w={32} h={36} vb="0 0 32 36"><path d="M0 5h13l2 3v4H0z" fill="#e0a010" /><path d="M0 9h14l2-2h16v22.500H0z" fill="#ffd45c" /><path d="M5 30V21q0-2 2-2h18q2 0 2 2v9.500h-6V25H11v5.500H5z" fill="#3b97dd" /></S> },
  { k: "chrome", icon: <ChromeIcon badge="T" />, active: true },
  { k: "mail", icon: <S s={36} vb="0 0 36 36"><path d="M0 12L18 0l18 12v10H0z" fill="#0b62b5" /><path d="M3 11h30v10L18 28 3 21z" fill="#f5f7f9" /><path d="M0 12l36 22H0z" fill="#1f9fe6" /><path d="M36 12L0 34h36z" fill="#38bff2" /><path d="M3 11h30L18 22z" fill="#fff" /><path d="M18 23L36 34H0z" fill="#168ad6" /></S>, none: true },
  { k: "cmd", icon: <S w={34} h={36} vb="0 0 34 36"><path d="M1 4.500h32v25H1z" fill="#050505" stroke="#b9bcbe" strokeWidth="1.500" /><path d="M2 5.500h30v3H2z" fill="#ddd" /><path d="M2 9h30v5L2 18z" fill="#2c2c2c" /><text x="3" y="15" fontFamily="Liberation Mono" fontSize="6.500" fontWeight="700" fill="#eee">C:\_</text></S> },
  { k: "notes", icon: <S w={34} h={36} vb="0 0 34 36"><path d="M13 3h18l1 25-5 3z" fill="#9a7a36" /><path d="M12 4h17l2 27-4 2L2 25z" fill="#dff0f2" /><path d="M12 6h14l1 21L3 23z" fill="#5fa5b0" /><path d="M14 6h12l.500 8-15 2z" fill="#a8d3d9" /><path d="M12 4h18" stroke="#555" strokeWidth="3" strokeDasharray="1.500 1" /></S>, multi: true },
  { k: "word", icon: <S w={36} h={36} vb="0 0 36 36"><rect x="8" y="2" width="28" height="8.500" fill="#41a5ee" /><rect x="8" y="10" width="28" height="8" fill="#2b7cd3" /><rect x="8" y="18" width="28" height="8" fill="#185abd" /><rect x="8" y="26" width="28" height="8" fill="#103f91" /><rect y="9" width="19" height="18" rx="1.500" fill="#1550b5" /><text x="2.500" y="23" fontFamily="Liberation Sans" fontSize="14" fontWeight="700" fill="#fff">W</text></S>, multi: true },
  { k: "chrome2", icon: <ChromeIcon /> },
  { k: "photos", icon: <S w={32} h={36} vb="0 0 32 36"><rect y="2" width="32" height="32" rx="1" fill="#2fa6ea" /><path d="M16 20l7-4 9 6v11H20z" fill="#7a7fd8" /><path d="M22 17l10 13v3H15z" fill="#2a4f9e" /><path d="M0 22l10-9 19 21H0z" fill="#174a8f" /><circle cx="21" cy="10" r="3.300" fill="#fff" /></S> },
  { k: "docker", icon: <S s={36} vb="0 0 36 36"><circle cx="18" cy="18" r="18" fill="#0fa6fb" /><path d="M6.500 18h18l1-4q3 0 3 2l2.500 0q-1 2.500-4 3-3 7-11 7-9 0-9.500-8z" fill="#fff" /><path d="M8 15h16M11 12h10M17 9h3.500" stroke="#fff" strokeWidth="2.700" strokeDasharray="2.700 .5" /></S> },
  { k: "stream", icon: <S s={36} vb="0 0 36 36"><defs><linearGradient id="st" x2="0" y2="1"><stop stopColor="#1678a0" /><stop offset="1" stopColor="#26343a" /></linearGradient></defs><rect width="36" height="36" rx="4" fill="url(#st)" /><path d="M13 17l-6-4L18 5l12 8-5 4M12 19l-5 4.500L18 31l12-8-12-7.500-4-3M18 13v9M18 16" stroke="#35aee6" strokeWidth="2.300" /></S> },
];

function Bottom() {
  return (
    <Taskbar>
      <SysButton><S s={24}><path d="M0 3.500l10-1.500v9.300H0zM11.200 1.800L24 0v11.300H11.200zM0 12.700h10V22L0 20.500zM11.200 12.700H24V24l-12.800-1.800z" fill="#fff" /></S></SysButton>
      <SysButton><S s={24} stroke="#fff" strokeWidth="1.400"><circle cx="15.500" cy="8.500" r="8" /><path d="M10 14.500L.5 24" /></S></SysButton>
      <SysButton><S s={24} stroke="#fff"><circle cx="12" cy="12" r="9.800" strokeWidth="2.800" /></S></SysButton>
      <SysButton $w={70}><S s={24} stroke="#fff" strokeWidth="1.200"><path d="M.6 0v3.500h15.500V0M.6 7h15.500v11H.6zM.6 24v-3.500h15.500V24M22.500 0v5M22.500 12v12" /><path d="M21 7h3v3.500h-3z" fill="#fff" stroke="none" /></S></SysButton>
      <SysButton $w={6} />
      {apps.map((a) => <AppButton key={a.k} $active={a.active} $multi={a.multi}>{a.icon}<OpenMark $active={a.active} $none={a.none} $multi={a.multi} /></AppButton>)}
      <Tray>
        <TrayItem $w={46} $j="flex-start"><S s={30} vb="0 0 30 30"><path d="M12 2q17 2 15 15-3 11-15 10-8-1-9-7 9 3 12-4 2-8-3-14z" fill="#fdc13a" /></S></TrayItem>
        <TrayItem $w={120} $j="flex-start" $fs={20}><Fit w={103}>18°C  Clear</Fit></TrayItem>
        <TrayItem $w={36}><S w={18} h={10} vb="0 0 18 10" stroke="#fff" strokeWidth="1.500"><path d="M1 9l8-8 8 8" /></S></TrayItem>
        <TrayItem $w={37}><S w={18} h={24} vb="0 0 18 24" stroke="#fff" strokeWidth="1.300"><rect x="2" y="6" width="10" height="13" rx="2" /><path d="M12 11l4-2v7l-4-2M4 3q4-3 7 0M4 22q4 2 7 0" /></S></TrayItem>
        <TrayItem $w={36}><S w={24} h={14} vb="0 0 24 14" stroke="#fff" strokeWidth="1.300"><path d="M1 1h19v11H1zM21 4.500h2v4h-2" /><path d="M3 3h7v7H3z" fill="#fff" stroke="none" /></S></TrayItem>
        <TrayItem $w={36}><S w={20} h={20} vb="0 0 20 20" stroke="#d5dadd" strokeWidth="1.400"><path d="M1 18Q2 3 18 1.500M6 18Q7 8 18 6.500M11 18q0-6 7-6.500" /><circle cx="16.500" cy="17" r="1.500" fill="#fff" /></S></TrayItem>
        <TrayItem $w={35}><S w={24} h={20} vb="0 0 24 20" stroke="#fff" strokeWidth="1.300"><path d="M1 7h4l5-5v16l-5-5H1z" /><path d="M13 7q2 3 0 6M16 5q3.500 5 0 10" /><path d="M19 3q5 7 0 14" stroke="#87939a" /></S></TrayItem>
        <TrayItem $w={51} $fs={18}><Fit w={35}>ENG</Fit></TrayItem>
        <Clock><Fit w={44}>21:00</Fit><Fit w={94}>05-02-2022</Fit></Clock>
        <Notice><S w={26} h={26} vb="0 0 26 26"><path d="M1 1h23v17H11l-4 5v-5H1z" fill="#fff" /><path d="M5 6h15M5 10h15M5 14h9" stroke="#25323b" strokeWidth="1.400" /></S><Badge>3</Badge></Notice>
      </Tray>
    </Taskbar>
  );
}

export default function App() {
  return (
    <Screen>
      <Global />
      <Browser />
      <Stage>
        <Editor>
          <EditorTools />
          <Work><Sidebar /><Splitter /><Diagram /><FormatPanel /></Work>
        </Editor>
        <Scroll />
      </Stage>
      <Bottom />
    </Screen>
  );
}
